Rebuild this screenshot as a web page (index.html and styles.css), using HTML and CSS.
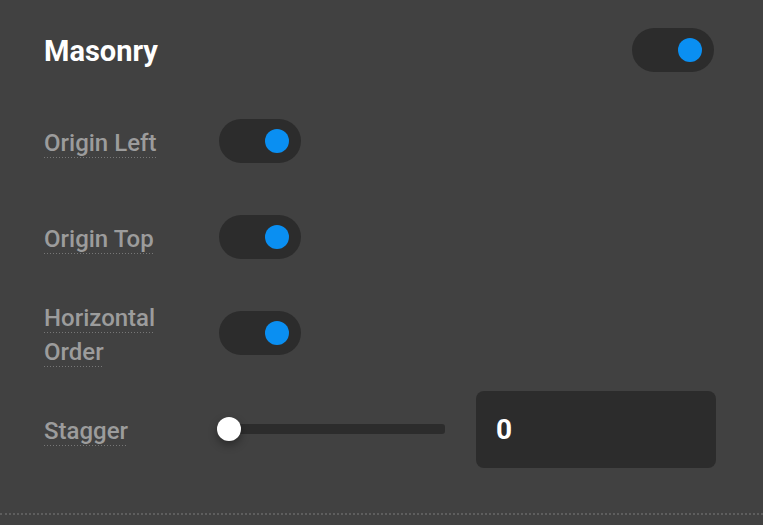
FILE: index.html
```html
<!DOCTYPE html>
<html>
<head>
<meta charset="utf-8">
<link rel="stylesheet" href="styles.css">
</head>
<body>
<div class="panel">
  <div class="header">
    <h2 class="title">Masonry</h2>
    <div class="toggle on"><span class="knob"></span></div>
  </div>
  <div class="row">
    <div class="label"><span class="lbl">Origin Left</span></div>
    <div class="toggle on"><span class="knob"></span></div>
  </div>
  <div class="row">
    <div class="label"><span class="lbl">Origin Top</span></div>
    <div class="toggle on"><span class="knob"></span></div>
  </div>
  <div class="row">
    <div class="label narrow"><span class="lbl">Horizontal Order</span></div>
    <div class="toggle on"><span class="knob"></span></div>
  </div>
  <div class="row stagger">
    <div class="label"><span class="lbl">Stagger</span></div>
    <div class="slider"><div class="track"></div><span class="thumb"></span></div>
    <div class="numbox">0</div>
  </div>
</div>
</body>
</html>
```
FILE: styles.css
```css
html, body {
  margin: 0;
  padding: 0;
  background: #414141;
}
body {
  font-family: Roboto, "Liberation Sans", sans-serif;
  width: 763px;
  height: 525px;
  overflow: hidden;
}
.panel {
  padding: 28px 47px 36px 44px;
  border-bottom: 2px dotted #5e5e5e;
}
.header {
  display: flex;
  justify-content: space-between;
  align-items: center;
  height: 44px;
  margin-bottom: 21px;
  padding-right: 2px;
}
.title {
  margin: 0;
  font-size: 29px;
  font-weight: 700;
  color: #ffffff;
  padding-top: 1px;
}
.toggle {
  width: 82px;
  height: 44px;
  border-radius: 22px;
  background: #2c2c2c;
  display: flex;
  align-items: center;
  justify-content: flex-end;
  padding: 0 12px;
  box-sizing: border-box;
}
.knob {
  width: 24px;
  height: 24px;
  border-radius: 50%;
  background: #0a8ff2;
}
.row {
  display: grid;
  grid-template-columns: 175px 82px;
  align-items: center;
  height: 96px;
}
.row.stagger {
  grid-template-columns: 175px 226px 240px;
  column-gap: 0;
}
.label {
  font-size: 24px;
  font-weight: 500;
  line-height: 34px;
  color: #9c9c9c;
  padding-top: 3px;
}
.label.narrow {
  width: 125px;
}
.lbl {
  padding-bottom: 1px;
  background-image: linear-gradient(to right, #777 0 1px, transparent 1px 3px);
  background-size: 3px 1px;
  background-repeat: repeat-x;
  background-position: 0 100%;
}
.slider {
  position: relative;
  height: 24px;
  display: flex;
  align-items: center;
}
.track {
  width: 100%;
  height: 10px;
  border-radius: 3px;
  background: #2c2c2c;
}
.thumb {
  position: absolute;
  left: -2px;
  top: 0;
  width: 24px;
  height: 24px;
  border-radius: 50%;
  background: #ffffff;
  box-shadow: 0 4px 8px rgba(0, 0, 0, 0.35);
}
.numbox {
  margin-left: 31px;
  width: 240px;
  height: 77px;
  box-sizing: border-box;
  border-radius: 8px;
  background: #2c2c2c;
  color: #ffffff;
  font-size: 28px;
  font-weight: 700;
  display: flex;
  align-items: center;
  padding-left: 20px;
}
```
